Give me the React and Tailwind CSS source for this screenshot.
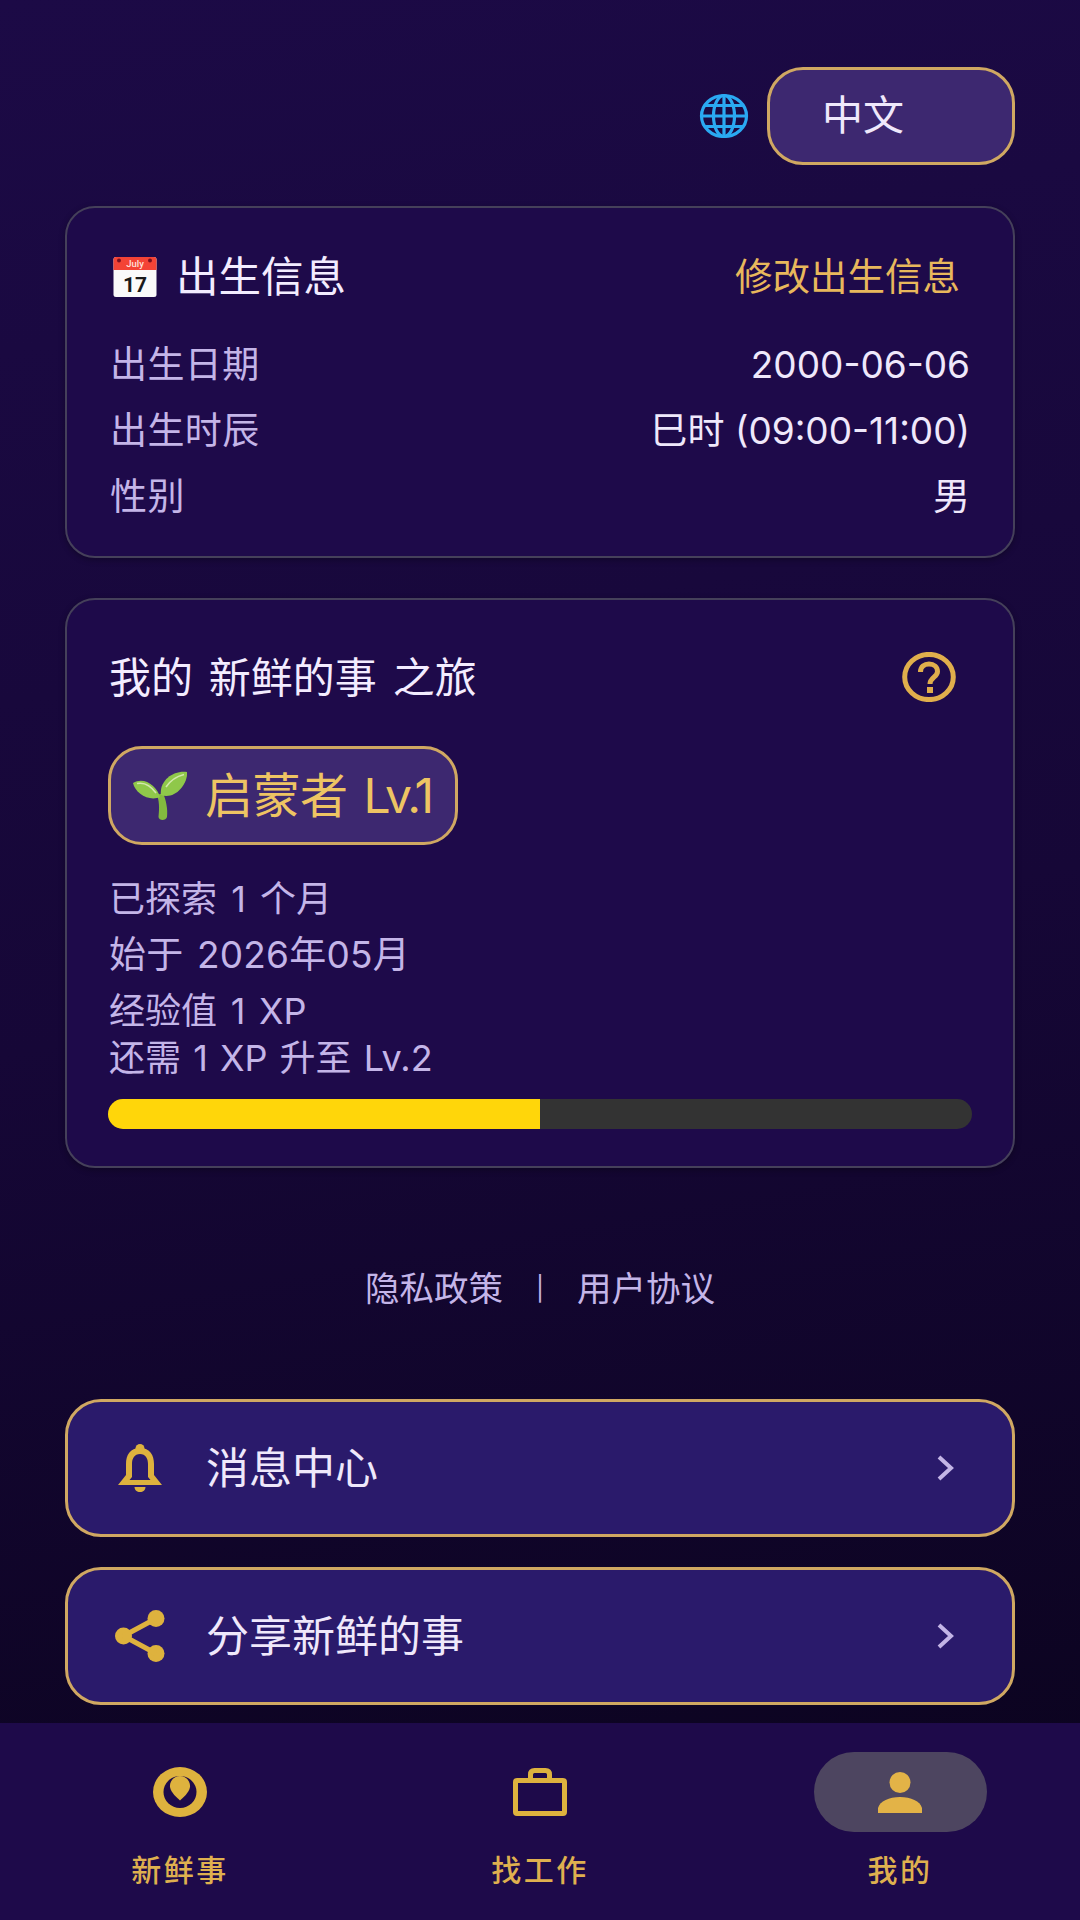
import React from "react";

const FONT = "font-['Inter','Noto_Sans_CJK_SC',sans-serif]";

function Globe() {
  return (
    <svg width="50" height="46" viewBox="0 0 50 46" fill="none" stroke="#2aa9f2" strokeWidth="3.2">
      <ellipse cx="25" cy="23" rx="22.5" ry="20.5" />
      <ellipse cx="25" cy="23" rx="10.5" ry="20.5" />
      <path d="M25 2.5V43.5M2.5 23H47.5M6 12.5H44M6 33.5H44" />
    </svg>
  );
}

function CalendarEmoji() {
  return (
    <svg width="44" height="42" viewBox="0 0 44 42">
      <rect x="0.5" y="1" width="43" height="40" rx="2.5" fill="#fafafa" />
      <path d="M0.5 14V3.500A2.5 2.5 0 0 1 3 1H41A2.5 2.5 0 0 1 43.5 3.500V14Z" fill="#f44336" />
      <circle cx="6" cy="4.500" r="2" fill="#7a1020" />
      <circle cx="37" cy="4.500" r="2" fill="#7a1020" />
      <text x="22" y="11" textAnchor="middle" fontSize="9.5" fill="#ffe0dc" fontFamily="Roboto, sans-serif" fontWeight="500">July</text>
      <text x="22" y="36" textAnchor="middle" fontSize="21" fill="#1a1a1a" fontFamily="Roboto, sans-serif" fontWeight="700">17</text>
    </svg>
  );
}

function Seedling() {
  return (
    <svg width="54" height="50" viewBox="0 0 54 50">
      <path d="M24 24C27 32 26 41 25.500 46C26 50 33 50 34 46C35 38 33 29 30 22Z" fill="#83b93f" />
      <path d="M27 26C24 15 11 5 0 12C2 22 16 31 27 26Z" fill="#8fc84a" />
      <path d="M28 24C26 10 40 -1 54 1C55 13 42 29 28 24Z" fill="#8fc84a" />
      <path d="M4 12.500C11 11 18 15 23 22" fill="none" stroke="#d3e8ae" strokeWidth="1.500" />
      <path d="M33 16C37 10 43 5.500 51 3.500" fill="none" stroke="#d3e8ae" strokeWidth="1.500" />
    </svg>
  );
}

function Help() {
  return (
    <svg width="54" height="50" viewBox="0 0 54 50" fill="none" stroke="#e0ae4c">
      <ellipse cx="27" cy="25" rx="24.300" ry="22.600" strokeWidth="5" />
      <path d="M18.500 20C18.500 14.500 22.500 12 27 12C32 12 35.500 15 35.500 19.500C35.500 25 28 25.500 28 32" strokeWidth="5" />
      <path d="M28 35V41" strokeWidth="6" />
    </svg>
  );
}

function Bell() {
  return (
    <svg width="44" height="48" viewBox="0 0 44 48" fill="#deb23e">
      <circle cx="22" cy="4.500" r="4.500" />
      <path fillRule="evenodd" d="M22 4C32 4 36 11 36 20V31L44 41H0L8 31V20C8 11 12 4 22 4ZM22 10C16.500 10 14 14.500 14 20V33L11.500 36H32.500L30 33V20C30 14.500 27.500 10 22 10Z" />
      <path d="M16.500 43H27.500C27.500 46 25 48 22 48C19 48 16.500 46 16.500 43Z" />
    </svg>
  );
}

function Share() {
  return (
    <svg width="50" height="52" viewBox="0 0 50 52" fill="#deb23e">
      <circle cx="8.500" cy="26" r="8.500" />
      <circle cx="41" cy="8.500" r="8.500" />
      <circle cx="41" cy="43.500" r="8.500" />
      <path d="M8.500 26L41 8.500M8.500 26L41 43.500" stroke="#deb23e" strokeWidth="5" />
    </svg>
  );
}

function Chevron() {
  return (
    <svg width="20" height="28" viewBox="0 0 20 28" fill="none" stroke="#c3b5e6" strokeWidth="4">
      <path d="M3 3L15 14L3 25" />
    </svg>
  );
}

function FreshIcon() {
  return (
    <svg width="54" height="50" viewBox="0 0 54 50">
      <ellipse cx="27" cy="25" rx="27" ry="25" fill="#deb23e" />
      <ellipse cx="27" cy="25" rx="16.500" ry="16" fill="#1e0a4a" />
      <path d="M27 9C34 9 37.500 15 37 20C36 26 30 30.500 27 33.500C24 30.500 18 26 17 20C16.500 15 20 9 27 9Z" fill="#deb23e" />
    </svg>
  );
}

function Briefcase() {
  return (
    <svg width="54" height="48" viewBox="0 0 54 48" fill="none" stroke="#deb23e" strokeWidth="5" strokeLinejoin="round">
      <rect x="2.500" y="12.500" width="49" height="33" rx="1.500" />
      <path d="M17.500 12.500V6.500C17.500 4 19 2.500 21.500 2.500H32.500C35 2.500 36.500 4 36.500 6.500V12.500" />
    </svg>
  );
}

function User() {
  return (
    <svg width="44" height="41" viewBox="0 0 44 41" fill="#e3b347">
      <circle cx="22" cy="10.500" r="10.500" />
      <path d="M0 41V36C2 29 11 25 22 25C33 25 42 29 44 36V41Z" />
    </svg>
  );
}

function InfoRow({ label, value }) {
  return (
    <div className="flex h-[66px] items-center justify-between text-[37px] leading-[66px]">
      <span className="tracking-[0.4px] text-[#c4b5e8]">{label}</span>
      <span className="text-[#efe8fb]">{value}</span>
    </div>
  );
}

function MenuButton({ icon, label }) {
  return (
    <div className="flex h-[138px] items-center rounded-[36px] border-[3px] border-[#d0a862] bg-[#2a1a6b] pr-[56px]">
      <div className="flex w-[138px] shrink-0 justify-center pl-[6px]">{icon}</div>
      <span className="flex-1 text-[43px] leading-[60px] text-[#efe8fb]">{label}</span>
      <Chevron />
    </div>
  );
}

function NavItem({ icon, label, active }) {
  return (
    <div className="flex flex-col items-center pt-[29px]">
      <div className={`flex h-[80px] w-[173px] items-center justify-center rounded-full ${active ? "bg-[#4d4560]" : ""}`}>{icon}</div>
      <span className="mt-[16px] text-[30px] font-medium leading-[44px] tracking-[2.5px] text-[#dfb04f]">{label}</span>
    </div>
  );
}

export default function App() {
  return (
    <div className={`flex h-[1920px] w-[1080px] flex-col overflow-hidden bg-linear-[170deg] from-[#1c0a46] via-[#160737] to-[#0a031c] ${FONT}`}>
      <main className="flex flex-1 flex-col px-[65px] pt-[67px]">
        <div className="flex items-center justify-end gap-[18px]">
          <Globe />
          <div className="flex h-[98px] w-[248px] items-center rounded-[36px] border-[3px] border-[#d0a862] bg-[#3d2870] pl-[52px] text-[41px] text-[#efe8fb]">中文</div>
        </div>

        <section className="mt-[41px] h-[352px] rounded-[30px] border-2 border-[#45405a] bg-[#1e0a4a] px-[43px] pt-[39px] shadow-[0_2px_6px_rgba(0,0,0,0.3)]">
          <div className="mb-[25px] flex h-[60px] items-center pl-[3px]">
            <CalendarEmoji />
            <span className="ml-[19px] flex-1 text-[42.500px] text-[#f3ecff]">出生信息</span>
            <span className="pr-[10px] text-[37.500px] text-[#e8b85c]">修改出生信息</span>
          </div>
          <InfoRow label="出生日期" value="2000-06-06" />
          <InfoRow label="出生时辰" value="巳时 (09:00-11:00)" />
          <InfoRow label="性别" value="男" />
        </section>

        <section className="mt-[40px] h-[570px] rounded-[30px] border-2 border-[#45405a] bg-[#1e0a4a] px-[41px] pt-[47px] shadow-[0_2px_6px_rgba(0,0,0,0.3)]">
          <div className="flex h-[60px] items-center justify-between pr-[16px]">
            <span className="pl-[1px] text-[42px] text-[#f3ecff] [word-spacing:4px]">我的 新鲜的事 之旅</span>
            <Help />
          </div>
          <div className="mt-[39px] flex h-[99px] w-[350px] items-center rounded-[34px] border-[3px] border-[#d0a862] bg-[#3d2870] pl-[22px] text-[48px] text-[#eec463] [word-spacing:3px]">
            <Seedling />
            <span className="ml-[18px] whitespace-nowrap tracking-[-0.5px]">启蒙者 <span className="tracking-[-2.500px]">Lv.1</span></span>
          </div>
          <div className="mt-[27px] h-[55px] pl-[1px] text-[36px] leading-[55px] text-[#c4b5e8] [word-spacing:4px]">已探索 1 个月</div>
          <div className="h-[55px] pl-[1px] text-[37px] leading-[55px] tracking-[0.2px] text-[#c4b5e8] [word-spacing:3px]">始于 2026年05月</div>
          <div className="mt-[5px] h-[47px] pl-[1px] text-[36px] leading-[48px] text-[#c4b5e8] [word-spacing:3.500px]">经验值 1 XP</div>
          <div className="h-[48px] pl-[1px] text-[36px] leading-[48px] text-[#c4b5e8] [word-spacing:2px]">还需 1 XP 升至 Lv.2</div>
          <div className="mt-[17px] h-[30px] w-[864px] overflow-hidden rounded-full bg-[#333333]">
            <div className="h-full w-1/2 bg-[#ffd60a]" />
          </div>
        </section>

        <div className="mt-[96px] flex h-[50px] items-center justify-center text-[34.500px] text-[#c4b5e8]">
          <span>隐私政策</span>
          <span className="mx-[33px] text-[24px]">|</span>
          <span>用户协议</span>
        </div>

        <div className="mt-[85px] flex flex-col gap-[30px]">
          <MenuButton icon={<Bell />} label="消息中心" />
          <MenuButton icon={<Share />} label="分享新鲜的事" />
        </div>
      </main>

      <nav className="grid h-[197px] shrink-0 grid-cols-3 bg-[#1e0a4a]">
        <NavItem icon={<FreshIcon />} label="新鲜事" />
        <NavItem icon={<Briefcase />} label="找工作" />
        <NavItem icon={<User />} label="我的" active />
      </nav>
    </div>
  );
}
